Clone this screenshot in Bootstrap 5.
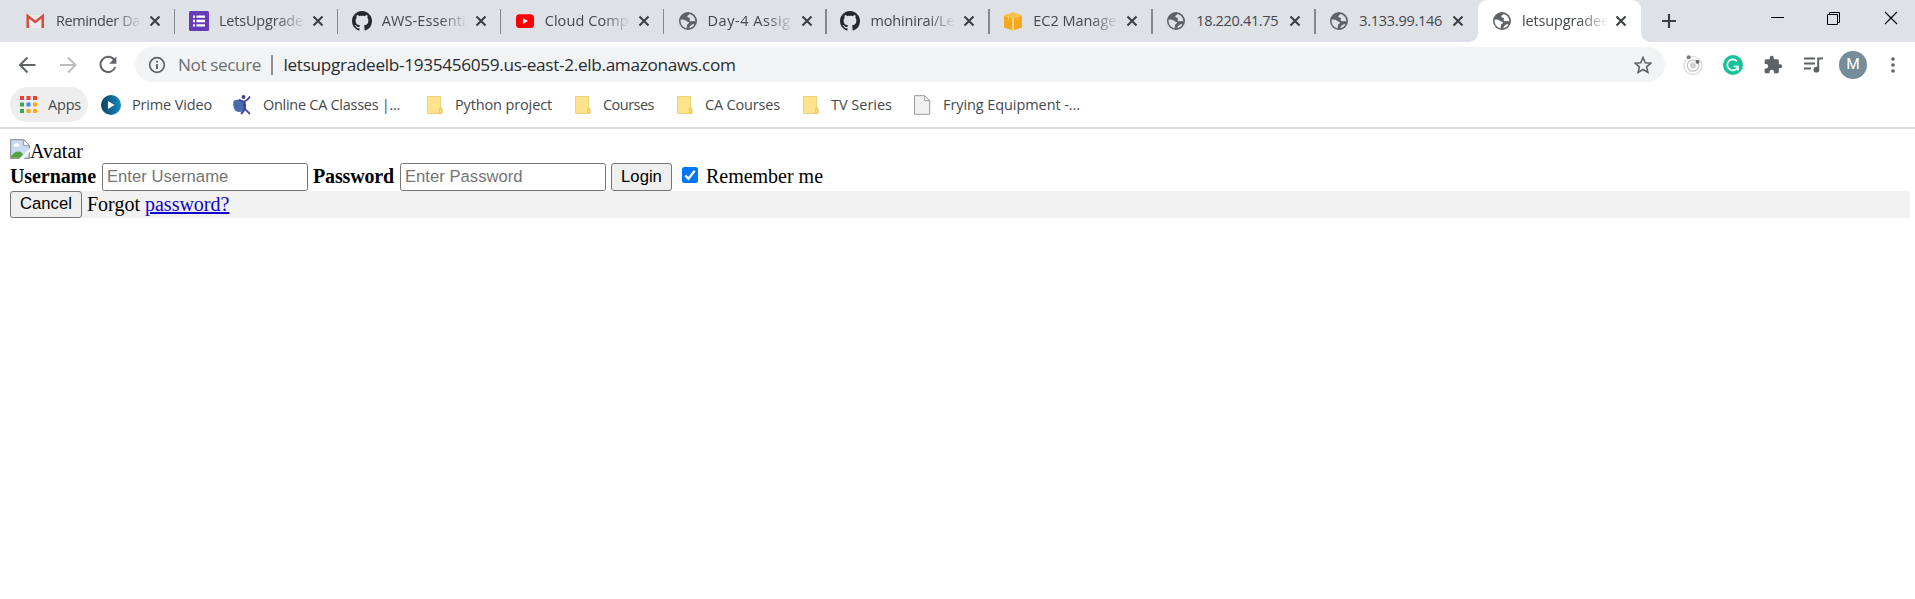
<!DOCTYPE html>
<html lang="en">
<head>
<meta charset="utf-8">
<title>letsupgradeelb</title>
<link rel="stylesheet" href="https://cdn.jsdelivr.net/npm/bootstrap@5.3.0/dist/css/bootstrap.min.css">
<style>
body{font-family:"Open Sans","Noto Sans",sans-serif;background:#fff;overflow:hidden}
svg{display:block;flex:none}
.fit{display:block;white-space:nowrap;flex:none}
.strip{height:42px;background:#dee1e6;padding-left:12px}
.tab{width:162.9px;height:42px;padding-left:14px;position:relative;flex:none;--cut:#dee1e6}
.tab+.tab:not(.on)::before{content:"";position:absolute;left:-1px;top:9px;width:1.5px;height:25px;background:#85888d}
.tab .ttl{width:86px;margin-left:10px;overflow:hidden;font-size:14.5px;line-height:20px;color:#45494d;-webkit-mask-image:linear-gradient(90deg,#000 58px,transparent 86px)}
.tab .full{-webkit-mask-image:none}
.tab .cls{margin-left:7px}
.tab.on{background:#fff;border-radius:9px 9px 0 0;--cut:#fff}
.on::before,.on::after{content:"";position:absolute;bottom:0;width:9px;height:9px}
.on::before{left:-9px;background:radial-gradient(circle at 0 0,transparent 8.5px,#fff 9px)}
.on::after{right:-9px;background:radial-gradient(circle at 100% 0,transparent 8.5px,#fff 9px)}
.winctl{margin-right:17px;gap:43px;height:36px}
.bar{height:45px;padding-left:18px}
.omni{width:1530px;height:35px;border-radius:18px;background:#f1f3f4;margin-left:16px;padding:0 13px 0 13px;font-size:17.2px;line-height:35px}
.sec{color:#6b6e72;margin-left:12px}
.vr1{width:1.5px;height:20px;background:#8b8e92;margin:0 11px 0 10px}
.url{color:#292c30}
.ava{width:28px;height:28px;border-radius:50%;background:#748d99;color:#fff;font-size:15.5px;font-family:Roboto,sans-serif}
.marks{height:42px;border-bottom:2px solid #d9dbdf;padding:0 0 5px 10px;font-size:14.5px;color:#45494d}
.apps{width:78px;height:35px;border-radius:18px;background:#eeeeef;padding-left:10px;margin-right:13px}
.mk{gap:11px;margin-right:20px}
.mk svg{width:20px}
.doc{font:20px/23px "Liberation Serif",serif;color:#000;padding:10px 5px 0 10px}
.lift{padding-bottom:2px}
.doc .tf{width:206px;height:28px;border:1.4px solid #767676;border-radius:2.5px;padding:0 4px;font:16.67px "Liberation Sans",sans-serif;background:#fff;outline:0}
.doc .tf::placeholder{color:#757575;opacity:1}
.doc button{border:1.4px solid #767676;border-radius:3px;background:#efefef;font:16.67px "Liberation Sans",sans-serif;color:#000;padding:0;line-height:1}
.doc a{color:#0f00cf}
.foot{height:27px;background:#f1f1f1}
</style>
</head>
<body>
<svg width="0" height="0" class="position-absolute">
<defs>
<symbol id="globe" viewBox="0 0 20 20"><circle cx="10" cy="10" r="9" fill="#5f6368"/><path d="M2.7 8.4c2.5.3 4.4-.3 4.9 1.2.5 1.2 2.9.5 3.3 2 .3 1.3-1.4 1.2-1.9 2.3-.4 1 .2 1.9-.6 3.5A7.4 7.4 0 0 1 2.7 8.4M11.500 2.900c-.4 1.2-2.400 1.300-2.300 2.500.1 1.300 2.300.5 2.700 1.900.3 1.200-1 1.900.2 2.700 1.500 1 3.200-.9 5.200.6a7.400 7.400 0 0 0-5.800-7.700M11.500 17.200c2.400-.5 4-2 4.900-3.600-1.600-.8-2.500.3-3.500.9-.9.6-1.400 1.200-1.400 2.700" style="fill:var(--cut)"/></symbol>
<symbol id="x" viewBox="0 0 12 12"><path d="M1.500 1.500l9 9M10.500 1.500l-9 9" stroke="#3c4043" stroke-width="2.100" fill="none"/></symbol>
<symbol id="git" viewBox="0 0 16 16"><path fill="#24292e" d="M8 0C3.580 0 0 3.580 0 8c0 3.540 2.290 6.530 5.470 7.590.4.070.55-.17.55-.38 0-.19-.01-.82-.01-1.490-2.010.37-2.530-.49-2.690-.94-.09-.23-.48-.94-.82-1.130-.28-.15-.68-.52-.01-.53.63-.01 1.080.58 1.230.82.72 1.210 1.870.87 2.330.66.07-.52.28-.87.51-1.070-1.780-.2-3.640-.89-3.640-3.950 0-.87.31-1.590.82-2.150-.08-.2-.36-1.020.08-2.120 0 0 .67-.21 2.200.82.64-.18 1.320-.27 2-.27s1.360.09 2 .27c1.530-1.040 2.200-.82 2.200-.82.44 1.100.16 1.920.08 2.120.51.56.82 1.270.82 2.150 0 3.070-1.870 3.750-3.650 3.950.29.25.54.73.54 1.480 0 1.070-.01 1.930-.01 2.200 0 .21.15.46.55.38A8.010 8.010 0 0 0 16 8c0-4.420-3.580-8-8-8"/></symbol>
<symbol id="folder" viewBox="0 0 20 20"><path d="M3.500 1.500h13v11.500l1.500 1v4.500H3.500z" fill="#fde48b" stroke="#ecd278"/><path d="M15.500 18.300v-5h2.300v5z" fill="#fbe07c" stroke="#e3c352" stroke-width=".8"/></symbol>
</defs>
</svg>

<div class="strip d-flex">
  <div class="tab d-flex align-items-center"><svg width="20" height="20" viewBox="0 0 20 20"><path d="M2 4h15v13H2z" fill="#eceaea"/><path d="M1.700 17V5l7.500 6 7.500-6v12" fill="none" stroke="#d54b3f" stroke-width="2.500"/></svg><span class="ttl"><span class="fit" data-w="84">Reminder Da</span></span><svg class="cls" width="12" height="12"><use href="#x"/></svg></div>
  <div class="tab d-flex align-items-center"><svg width="20" height="20" viewBox="0 0 20 20"><rect width="20" height="20" rx="1.500" fill="#673ab7"/><path d="M4 5.600h2M4 10h2M4 14.400h2M7.500 5.600H16M7.500 10H16M7.500 14.400H16" stroke="#fff" stroke-width="2.300"/></svg><span class="ttl"><span class="fit" data-w="84">LetsUpgrade</span></span><svg class="cls" width="12" height="12"><use href="#x"/></svg></div>
  <div class="tab d-flex align-items-center"><svg width="20" height="20"><use href="#git"/></svg><span class="ttl"><span class="fit" data-w="84">AWS-Essenti</span></span><svg class="cls" width="12" height="12"><use href="#x"/></svg></div>
  <div class="tab d-flex align-items-center"><svg width="20" height="20" viewBox="0 0 20 20"><rect x="1" y="3.200" width="18" height="13.800" rx="3.500" fill="#f00"/><path d="M8 7.200l5 2.900-5 2.900z" fill="#fff"/></svg><span class="ttl"><span class="fit" data-w="84">Cloud Comp</span></span><svg class="cls" width="12" height="12"><use href="#x"/></svg></div>
  <div class="tab d-flex align-items-center"><svg width="20" height="20"><use href="#globe"/></svg><span class="ttl"><span class="fit" data-w="83">Day-4 Assig</span></span><svg class="cls" width="12" height="12"><use href="#x"/></svg></div>
  <div class="tab d-flex align-items-center"><svg width="20" height="20"><use href="#git"/></svg><span class="ttl"><span class="fit" data-w="84">mohinirai/Le</span></span><svg class="cls" width="12" height="12"><use href="#x"/></svg></div>
  <div class="tab d-flex align-items-center"><svg width="20" height="20" viewBox="0 0 20 20"><path d="M1 4.500l9-3 9 3v12l-9 3-9-3z" fill="#f5a81c"/><path d="M1 4.500l9-3 9 3-9 2z" fill="#fbbf46"/><path d="M10 6.500v13" stroke="#fde0a0" stroke-width="1.500"/><path d="M1 4.600l9 2 9-2M5.500 3.200v6M14.500 3.200v6" fill="none" stroke="#fbcc6b" stroke-width=".9"/></svg><span class="ttl"><span class="fit" data-w="83">EC2 Manage</span></span><svg class="cls" width="12" height="12"><use href="#x"/></svg></div>
  <div class="tab d-flex align-items-center"><svg width="20" height="20"><use href="#globe"/></svg><span class="ttl full"><span class="fit" data-w="82">18.220.41.75</span></span><svg class="cls" width="12" height="12"><use href="#x"/></svg></div>
  <div class="tab d-flex align-items-center"><svg width="20" height="20"><use href="#globe"/></svg><span class="ttl full"><span class="fit" data-w="83">3.133.99.146</span></span><svg class="cls" width="12" height="12"><use href="#x"/></svg></div>
  <div class="tab on d-flex align-items-center"><svg width="20" height="20"><use href="#globe"/></svg><span class="ttl"><span class="fit" data-w="87">letsupgradee</span></span><svg class="cls" width="12" height="12"><use href="#x"/></svg></div>
  <svg class="align-self-center" style="margin-left:20px" width="16" height="16" viewBox="0 0 16 16"><path d="M8 1v14M1 8h14" stroke="#3c4043" stroke-width="2.200"/></svg>
  <div class="winctl d-flex align-items-center ms-auto">
    <svg width="14" height="14" viewBox="0 0 14 14"><path d="M1 6.500h13" stroke="#000"/></svg>
    <svg width="14" height="14" viewBox="0 0 14 14"><path d="M.5 3.500h10v10h-10zM2.500 3.500v-2h10v10h-2" fill="none" stroke="#000"/></svg>
    <svg width="14" height="14" viewBox="0 0 14 14"><path d="M1 1l12 12M13 1L1 13" stroke="#000" stroke-width="1.100"/></svg>
  </div>
</div>

<div class="bar d-flex align-items-center">
  <svg width="20" height="20" viewBox="0 0 20 20"><path d="M17.500 10H3M9.500 2.500L2 10l7.500 7.500" fill="none" stroke="#5f6368" stroke-width="2"/></svg>
  <svg class="ms-3" style="margin-right:22px" width="28" height="20" viewBox="-4 0 28 20"><path d="M2 10h15M10 2.500l7.500 7.500-7.500 7.500" fill="none" stroke="#babcbe" stroke-width="2"/></svg>
  <svg style="margin-left:-7px" width="22" height="22" viewBox="0 0 22 22"><path d="M17.300 6A7.600 7.600 0 1 0 18.300 13" fill="none" stroke="#5f6368" stroke-width="2"/><path d="M19.400 2.500v7.300h-7.300z" fill="#5f6368"/></svg>
  <div class="omni d-flex align-items-center">
    <svg width="18" height="18" viewBox="0 0 18 18"><circle cx="9" cy="9" r="7.300" fill="none" stroke="#5f6368" stroke-width="1.700"/><path d="M9 8v5M9 4.800v1.800" stroke="#5f6368" stroke-width="1.900"/></svg>
    <span class="fit sec" data-w="83">Not secure</span><span class="vr1"></span><span class="fit url" data-w="452">letsupgradeelb-1935456059.us-east-2.elb.amazonaws.com</span>
    <svg class="ms-auto" width="18" height="18" viewBox="0 0 18 18"><path d="M9 1.500l2.250 5.200 5.650.5-4.300 3.700 1.300 5.500L9 13.500l-4.900 2.900 1.300-5.500-4.300-3.700 5.650-.5z" fill="none" stroke="#5f6368" stroke-width="1.600"/></svg>
  </div>
  <div class="d-flex align-items-center" style="margin-left:17.500px;gap:20px">
    <svg width="20" height="20" viewBox="0 0 20 20"><circle cx="10" cy="10.500" r="9" fill="none" stroke="#d8d8d8" stroke-width="1.200"/><circle cx="10" cy="10.500" r="5.700" fill="none" stroke="#c9c9c9" stroke-width="1.300"/><circle cx="10" cy="10.500" r="3" fill="#d2d2d2"/><circle cx="5.700" cy="2.300" r="2" fill="#77797b"/><circle cx="14.500" cy="6.700" r="2" fill="#66686a"/></svg>
    <svg width="20" height="20" viewBox="0 0 20 20"><circle cx="10" cy="10" r="10" fill="#15c39a"/><path d="M14 6.200A5.500 5.500 0 1 0 14.900 12M10.500 11.500H15v4" fill="none" stroke="#fff" stroke-width="1.700"/></svg>
    <svg width="20" height="20" viewBox="0 0 24 24"><path fill="#5f6368" d="M20.500 11H19V7c0-1.100-.9-2-2-2h-4V3.500a2.500 2.500 0 0 0-5 0V5H4c-1.100 0-1.990.9-1.990 2v3.800H3.500a2.700 2.700 0 0 1 0 5.400H2V20c0 1.100.9 2 2 2h3.800v-1.500a2.700 2.700 0 0 1 5.400 0V22H17c1.100 0 2-.9 2-2v-4h1.500a2.500 2.500 0 0 0 0-5z"/></svg>
    <svg width="20" height="20" viewBox="0 0 20 20"><path d="M1 3.500h11M1 8.500h11M1 13.500h7M15.200 14V3.500H20" fill="none" stroke="#5f6368" stroke-width="2"/><circle cx="13.400" cy="14.700" r="2.900" fill="#5f6368"/></svg>
  </div>
  <div class="ava d-flex align-items-center justify-content-center" style="margin-left:16.500px">M</div>
  <svg style="margin-left:22.500px" width="6" height="18" viewBox="0 0 6 18"><g fill="#5f6368"><circle cx="3" cy="3" r="1.800"/><circle cx="3" cy="9" r="1.800"/><circle cx="3" cy="15" r="1.800"/></g></svg>
</div>

<div class="marks d-flex align-items-center">
  <div class="apps d-flex align-items-center"><svg width="17" height="17" viewBox="0 0 17 17"><path d="M0 0h4v4H0zM6.500 0h4v4h-4zM13 0h4v4h-4z" fill="#ea4335"/><path d="M0 6.500h4v4H0zM0 13h4v4H0z" fill="#34a853"/><path d="M6.500 6.500h4v4h-4z" fill="#4285f4"/><path d="M6.500 13h4v4h-4zM13 6.500h4v4h-4zM13 13h4v4h-4z" fill="#fbab18"/></svg><span class="fit" style="margin-left:11px" data-w="33">Apps</span></div>
  <div class="mk d-flex align-items-center"><svg height="20" viewBox="0 0 20 20"><defs><linearGradient id="pv" x2="1"><stop stop-color="#0b4264"/><stop offset="1" stop-color="#138bc5"/></linearGradient></defs><circle cx="10" cy="10" r="10" fill="url(#pv)"/><path d="M7 6l6.500 4L7 14z" fill="#fff"/></svg><span class="fit" data-w="80">Prime Video</span></div>
  <div class="mk d-flex align-items-center"><svg height="20" viewBox="0 0 20 20"><path d="M1.500 6Q5 3.500 11.500 6l2 9.500q-5 2.500-10 .5-3-4-2-10" fill="#4a6cad"/><circle cx="11.500" cy="2" r="1.900" fill="#403e99"/><path d="M18 1.500Q16 5 12.500 6.500q-3 5.500 5.500 12.500M7 4.500q3 2 5.500 2 2.500 7-3.500 12.500" fill="none" stroke="#403e99" stroke-width="1.700"/></svg><span class="fit" data-w="141" data-t="137">Online CA Classes |...</span></div>
  <div class="mk d-flex align-items-center"><svg height="20"><use href="#folder"/></svg><span class="fit" data-w="97">Python project</span></div>
  <div class="mk d-flex align-items-center"><svg height="20"><use href="#folder"/></svg><span class="fit" data-w="51">Courses</span></div>
  <div class="mk d-flex align-items-center"><svg height="20"><use href="#folder"/></svg><span class="fit" data-w="75">CA Courses</span></div>
  <div class="mk d-flex align-items-center"><svg height="20"><use href="#folder"/></svg><span class="fit" data-w="61">TV Series</span></div>
  <div class="mk d-flex align-items-center"><svg height="20" viewBox="0 0 20 20"><path d="M2.500.7h10.200l5 5v13.600H2.500z" fill="#f1f1f2" stroke="#999b9e"/><path d="M12.700.7v5h5z" fill="#fff" stroke="#999b9e"/></svg><span class="fit" data-w="137">Frying Equipment -...</span></div>
</div>

<div class="doc">
  <div class="d-flex align-items-center" style="height:24px"><svg class="align-self-start" width="20" height="20" viewBox="0 0 20 20"><path d="M.6.600h13l5.800 5.800v13H.6z" fill="#c6d9f5" stroke="#9a9a9a" stroke-width="1.200"/><path d="M13.600.6v5.800h5.800z" fill="#fff" stroke="#9a9a9a"/><path d="M3.500 7.500a2 2 0 0 1 1.700-2.500 2 2 0 0 1 3.500.3 1.500 1.500 0 0 1 .5 2.200z" fill="#fff"/><path d="M1.200 17q3.500-5 7.500-4.500 4 .5 5.500 6.300h-13z" fill="#4da53c"/><path d="M9 20L20 9v3.500L13.500 20z" fill="#fff"/></svg><span>Avatar</span></div>
  <div class="d-flex align-items-center" style="height:28px">
    <b class="fit lift" data-w="86">Username</b><input class="tf" style="margin-left:6px" placeholder="Enter Username">
    <b class="fit lift" style="margin-left:5px" data-w="81">Password</b><input class="tf" style="margin-left:6px" placeholder="Enter Password">
    <button style="margin-left:5px;width:61px;height:28px">Login</button>
    <svg style="margin:-5px 8px 0 10px" width="16" height="16" viewBox="0 0 16 16"><rect width="16" height="16" rx="2.500" fill="#0075ff"/><path d="M3.200 8.500l3.200 3.200 6.300-8" fill="none" stroke="#fff" stroke-width="2.400"/></svg><span class="fit lift" data-w="117">Remember me</span>
  </div>
  <div class="foot d-flex align-items-center"><button style="width:72px;height:27px;margin-right:5px">Cancel</button><span>Forgot <a href="#">password?</a></span></div>
</div>
<script src="https://cdn.jsdelivr.net/npm/bootstrap@5.3.0/dist/js/bootstrap.bundle.min.js"></script>
<script>
// Track each label so that it fills its column width (data-w); data-t narrows the text inside that column.
function track(){
  document.querySelectorAll('.fit').forEach(function(el){
    el.style.letterSpacing='0';
    var r=document.createRange();r.selectNodeContents(el);
    var w=+el.dataset.w,t=+(el.dataset.t||w);
    el.style.letterSpacing=(t-r.getBoundingClientRect().width)/el.textContent.length+'px';
    el.style.width=w+'px';
  });
}
track();
document.fonts.ready.then(track);
</script>
</body>
</html>
